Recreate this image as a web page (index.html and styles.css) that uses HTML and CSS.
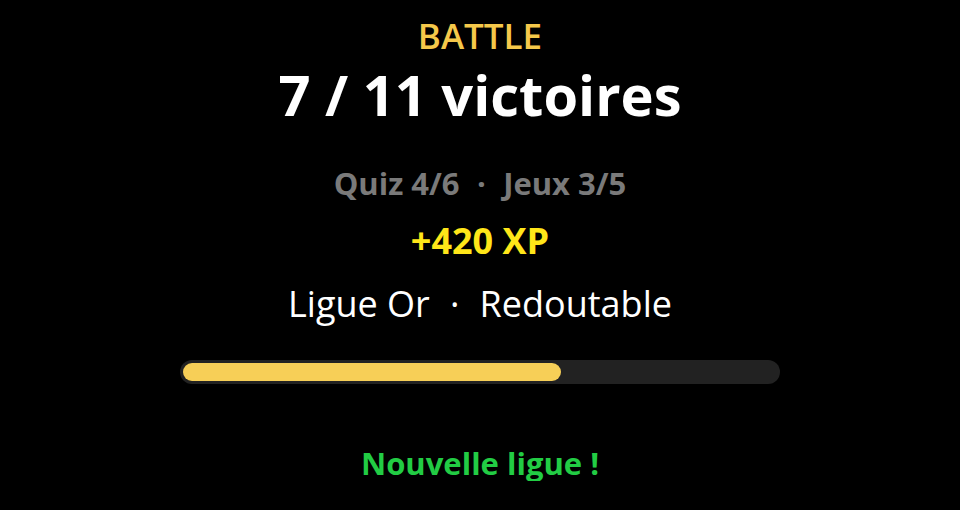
FILE: index.html
```html
<!DOCTYPE html>
<html lang="fr">
<head>
    <meta charset="UTF-8">
    <title>Battle</title>
    <meta name="viewport" content="width=device-width, initial-scale=1" />

    <link rel="stylesheet" href="styles.css">
</head>
<body>
    <div class="resultContainer">
        <div class="modeText">BATTLE</div>
        <div class="scoreText">7 / 11 victoires</div>
        <div class="detailText">Quiz 4/6 <span class="sep">·</span> Jeux 3/5</div>
        <div class="xpText">+420 XP</div>
        <div class="leagueText">Ligue Or <span class="sep">·</span> Redoutable</div>
        <div class="progressTrack">
            <div class="progressFill" style="width: 63.6%"></div>
        </div>
        <div class="promoText">Nouvelle ligue !</div>
    </div>
</body>
</html>
```

FILE: styles.css
```css
body {
    margin: 0;
    background: #000;
    color: #fff;
    font-family: 'Open Sans', 'Noto Sans', sans-serif;
}

.resultContainer {
    display: flex;
    flex-direction: column;
    align-items: center;
    padding-top: 19px;
    text-align: center;
}

.modeText {
    font-size: 35px;
    line-height: 34px;
    font-weight: 600;
    color: #f5c84a;
}

.scoreText {
    margin-top: 11px;
    font-size: 56px;
    line-height: 60px;
    font-weight: 700;
}

.detailText {
    margin-top: 41px;
    font-size: 31px;
    line-height: 36px;
    font-weight: 700;
    color: #7a7a7a;
}

.xpText {
    margin-top: 20px;
    font-size: 36px;
    line-height: 40px;
    font-weight: 700;
    color: #ffe619;
}

.leagueText {
    margin-top: 23px;
    font-size: 36px;
    line-height: 40px;
    font-weight: 500;
}

.sep {
    margin: 0 0.3em;
}

.progressTrack {
    box-sizing: border-box;
    width: 600px;
    height: 24px;
    margin-top: 36px;
    padding: 3px;
    border-radius: 12px;
    background: #222;
}

.progressFill {
    height: 100%;
    border-radius: 9px;
    background: #f7cf57;
}

.promoText {
    margin-top: 61px;
    font-size: 31px;
    line-height: 36px;
    font-weight: 700;
    color: #22cc44;
}
```
